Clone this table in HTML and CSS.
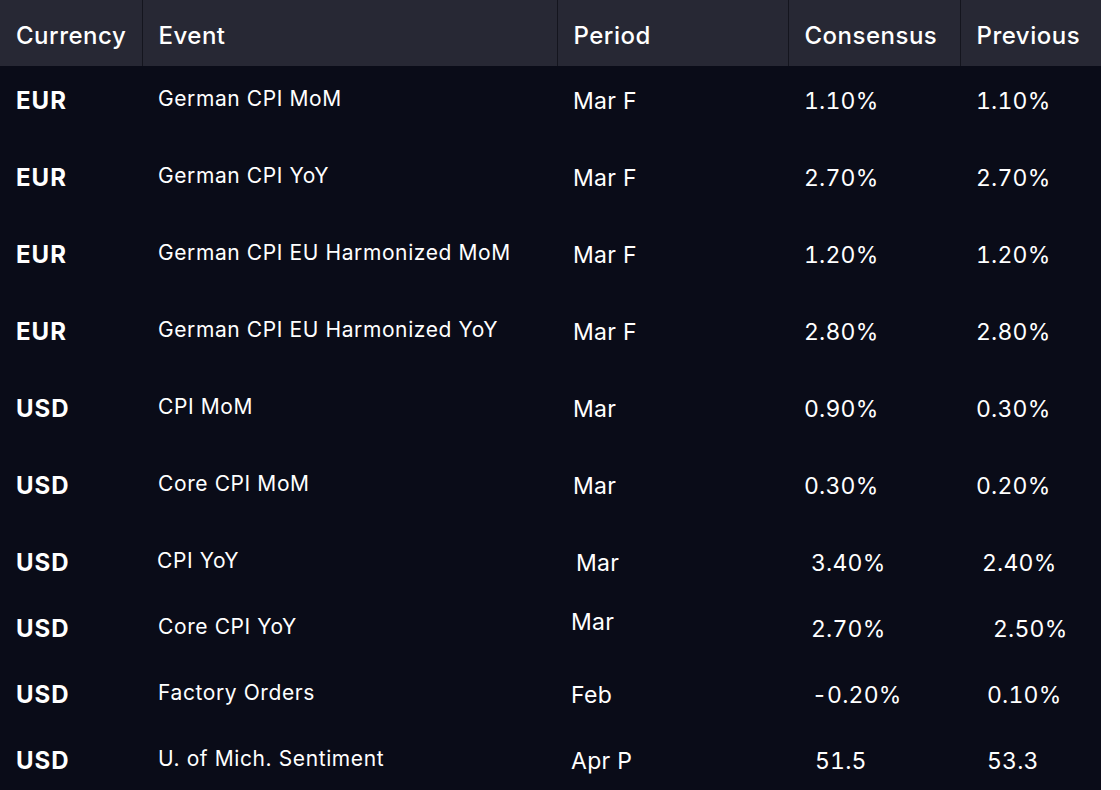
FILE: index.html
```html
<!DOCTYPE html>
<html>
<head>
<meta charset="utf-8">
<link rel="stylesheet" href="styles.css">
</head>
<body>
<table class="cal">
  <colgroup>
    <col class="c-cur"><col class="c-ev"><col class="c-per"><col class="c-con"><col class="c-prev">
  </colgroup>
  <thead>
    <tr>
      <th>Currency</th><th>Event</th><th>Period</th><th>Consensus</th><th>Previous</th>
    </tr>
  </thead>
  <tbody>
    <tr class="r-tall"><td class="cur">EUR</td><td class="ev">German CPI MoM</td><td>Mar F</td><td class="num">1.10%</td><td class="num">1.10%</td></tr>
    <tr class="r-tall"><td class="cur">EUR</td><td class="ev">German CPI YoY</td><td>Mar F</td><td class="num">2.70%</td><td class="num">2.70%</td></tr>
    <tr class="r-tall"><td class="cur">EUR</td><td class="ev">German CPI EU Harmonized MoM</td><td>Mar F</td><td class="num">1.20%</td><td class="num">1.20%</td></tr>
    <tr class="r-tall"><td class="cur">EUR</td><td class="ev">German CPI EU Harmonized YoY</td><td>Mar F</td><td class="num">2.80%</td><td class="num">2.80%</td></tr>
    <tr class="r-tall"><td class="cur">USD</td><td class="ev">CPI MoM</td><td>Mar</td><td class="num">0.90%</td><td class="num">0.30%</td></tr>
    <tr class="r-tall"><td class="cur">USD</td><td class="ev">Core CPI MoM</td><td>Mar</td><td class="num">0.30%</td><td class="num">0.20%</td></tr>
    <tr class="r-short"><td class="cur">USD</td><td class="ev ev-l1">CPI YoY</td><td class="per-r3">Mar</td><td class="num con-r7">3.40%</td><td class="num prev-r6">2.40%</td></tr>
    <tr class="r-short"><td class="cur">USD</td><td class="ev">Core CPI YoY</td><td class="per-l2 per-up">Mar</td><td class="num con-r7">2.70%</td><td class="num prev-r17">2.50%</td></tr>
    <tr class="r-short"><td class="cur">USD</td><td class="ev">Factory Orders</td><td class="per-l2">Feb</td><td class="num con-r10">-0.20%</td><td class="num prev-r11">0.10%</td></tr>
    <tr class="r-short"><td class="cur">USD</td><td class="ev">U. of Mich. Sentiment</td><td class="per-l2">Apr P</td><td class="num con-r11">51.5</td><td class="num prev-r11">53.3</td></tr>
  </tbody>
</table>
</body>
</html>
```
FILE: styles.css
```css
html, body {
  margin: 0;
  padding: 0;
  background: #ffffff;
}
body {
  width: 1120px;
  height: 790px;
  overflow: hidden;
  font-family: Inter, "Liberation Sans", sans-serif;
  color: #ffffff;
}
.cal {
  width: 1101px;
  border-collapse: collapse;
  table-layout: fixed;
  background: #0a0c18;
}
.c-cur { width: 142px; }
.c-ev { width: 415px; }
.c-per { width: 231px; }
.c-con { width: 172px; }
.c-prev { width: 141px; }

.cal th {
  height: 60px;
  padding: 6px 0 0 16px;
  background: #272834;
  text-align: left;
  font-weight: 500;
  font-size: 24px;
  line-height: 28px;
  letter-spacing: 0.5px;
  border-left: 1px solid #14151e;
  vertical-align: middle;
}
.cal th:first-child { border-left: none; }

.cal td {
  padding: 21px 0 0 16px;
  vertical-align: top;
  font-size: 23px;
  line-height: 28px;
  font-weight: 400;
  letter-spacing: 0.3px;
  white-space: nowrap;
}
.r-tall td { height: 56px; }
.r-short td { height: 45px; }

.cal td.cur { font-weight: 700; font-size: 24px; letter-spacing: 1px; }
.cal td.ev { font-size: 21px; padding-top: 19px; letter-spacing: 0.6px; }
.cal td.num { font-variant-numeric: tabular-nums; letter-spacing: 0.2px; }
.cal td.ev-l1 { padding-left: 15px; }
.cal td.per-r3 { padding-left: 19px; }
.cal td.per-l2 { padding-left: 14px; }
.cal td.per-up { padding-top: 14px; }
.cal td.con-r7 { padding-left: 23px; }
.cal td.con-r10 { padding-left: 24px; }
.cal td.con-r11 { padding-left: 27px; }
.cal td.prev-r6 { padding-left: 22px; }
.cal td.prev-r17 { padding-left: 33px; }
.cal td.prev-r11 { padding-left: 27px; }
```
